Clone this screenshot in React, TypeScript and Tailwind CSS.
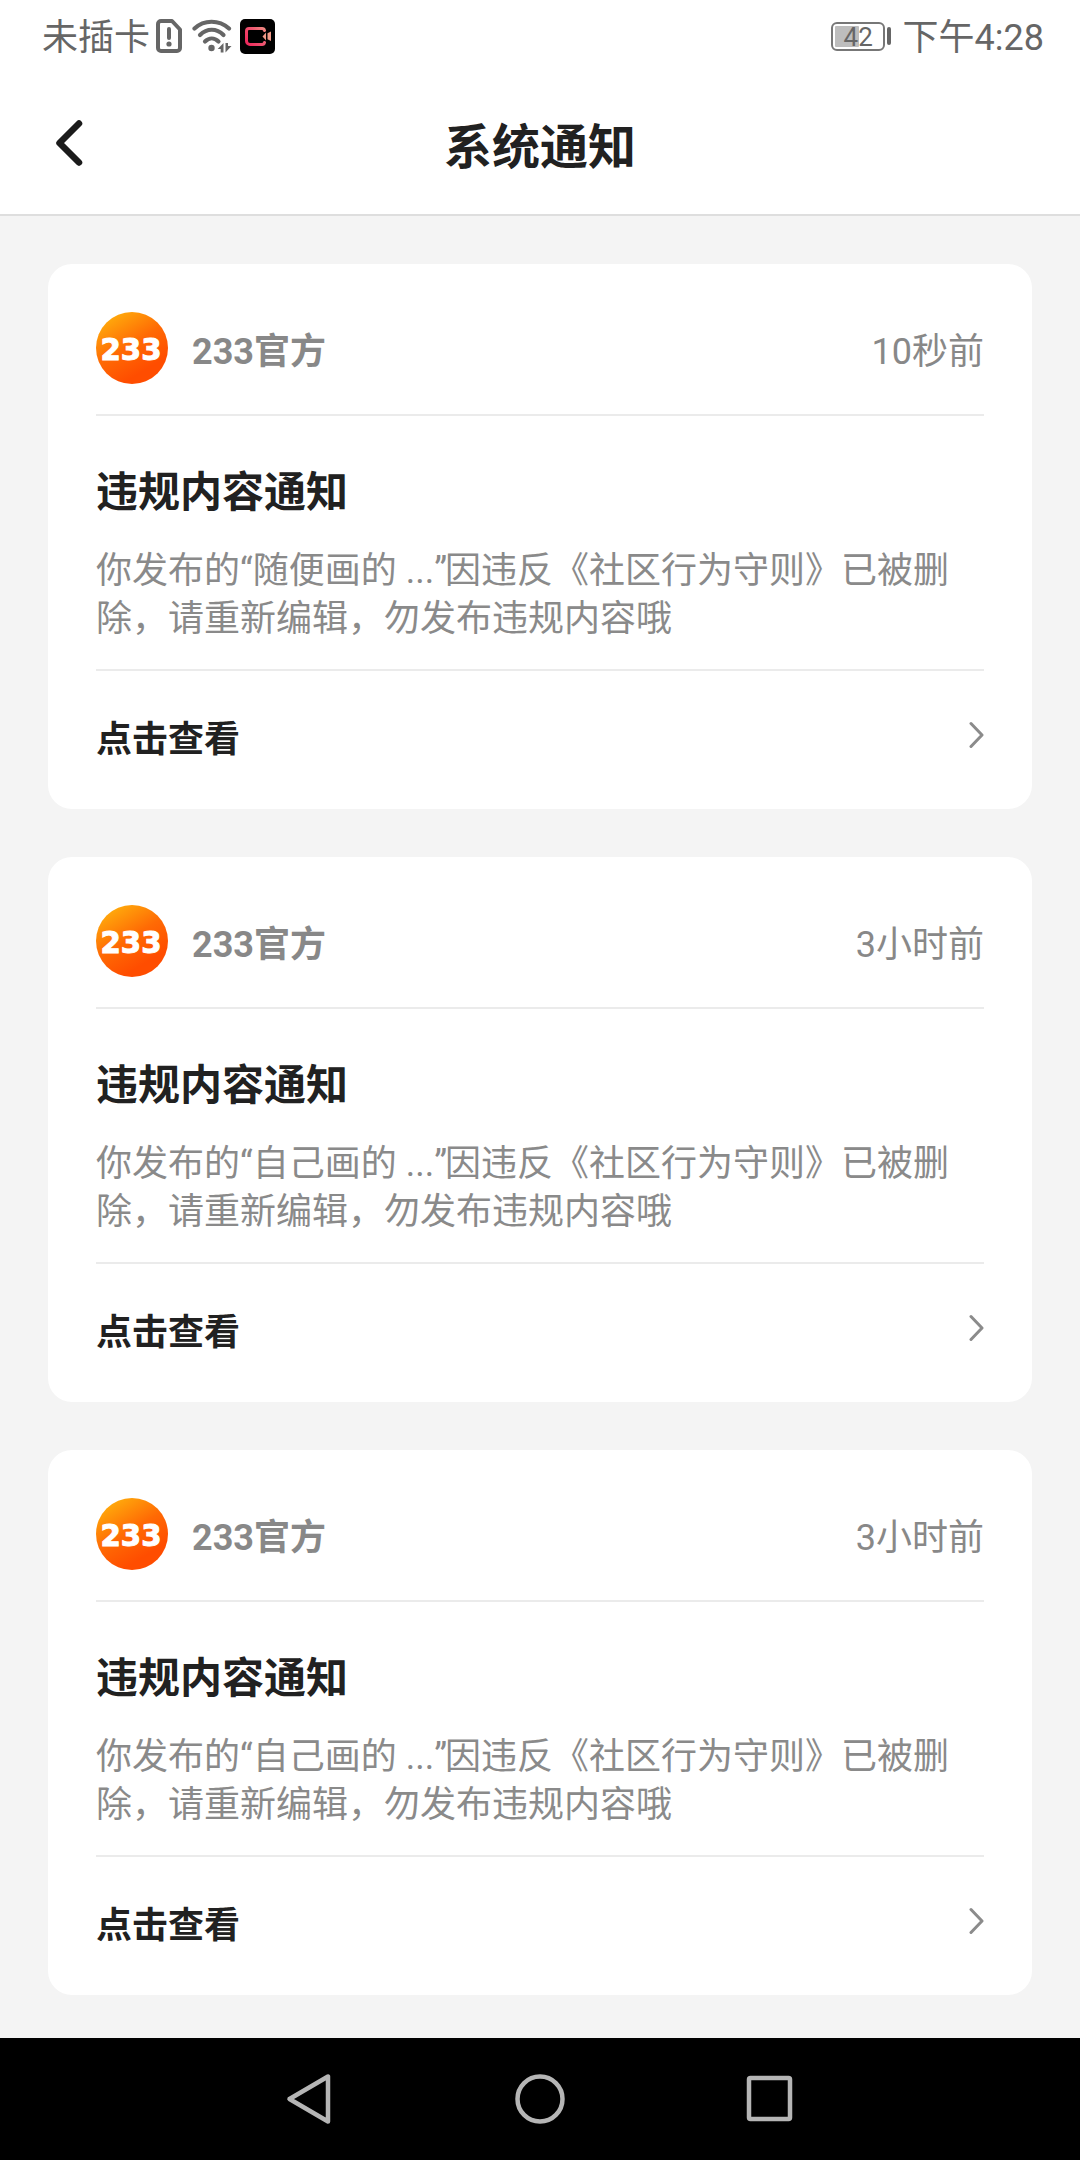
const cards = [
  { work: "随便画的", time: "10秒前" },
  { work: "自己画的", time: "3小时前" },
  { work: "自己画的", time: "3小时前" },
];

function StatusBar() {
  return (
    <div className="flex h-[72px] items-center justify-between pl-[42px] pr-[36px] text-[36px] leading-[72px] text-[#666]">
      <div className="flex h-full items-center">
        <span className="w-[114px] whitespace-nowrap pt-[4px]">未插卡</span>
        <svg width="26" height="34" viewBox="0 0 26 34" fill="none" stroke="currentColor" className="shrink-0">
          <path d="M5 2h11l8 8.5V29a3 3 0 0 1-3 3H5a3 3 0 0 1-3-3V5a3 3 0 0 1 3-3z" strokeWidth="4" strokeLinejoin="round" />
          <path d="M13 10v9" strokeWidth="4" strokeLinecap="round" />
          <circle cx="13" cy="25" r="2.6" fill="currentColor" stroke="none" />
        </svg>
        <svg width="40" height="34" viewBox="0 0 40 34" fill="none" stroke="currentColor" strokeWidth="4.2" className="ml-[10px] shrink-0" strokeLinecap="round">
          <path d="M2.500 9.500C12 .5 27 .5 37 9.500" />
          <path d="M8 16C15 9 24.500 9 31.500 16" />
          <path d="M13 22.500C17 18.500 22.500 18.500 26.500 22.500" />
          <circle cx="19.500" cy="29" r="3.2" fill="currentColor" stroke="none" />
          <path d="M31.500 24v9.500h-2.800v-3.500h-3zM33.500 33.500v-9.500h2.500v3h3.500z" fill="currentColor" stroke="none" />
        </svg>
        <svg width="35" height="35" viewBox="0 0 35 35" fill="none" className="ml-[8px] shrink-0">
          <defs>
            <linearGradient id="cam" x1="6" y1="28" x2="31" y2="8" gradientUnits="userSpaceOnUse">
              <stop stopColor="#ef2058" />
              <stop offset=".5" stopColor="#ee5570" />
              <stop offset="1" stopColor="#f2a68c" />
            </linearGradient>
          </defs>
          <rect width="35" height="35" rx="5" fill="#000" />
          <path d="M24.500 11.500a2.500 2.500 0 0 0-2.500-2H9a2.500 2.500 0 0 0-2.500 2.500V22A3.500 3.500 0 0 0 10 25.500h12a2.500 2.500 0 0 0 2.500-2" stroke="url(#cam)" strokeWidth="3" strokeLinecap="round" />
          <path d="M22.500 17.500l3.500-4v8zM27.500 14.200l3.500-1.700v9.500l-3.500-1.700z" fill="#f29a88" />
        </svg>
      </div>
      <div className="flex h-full items-center">
        <div className="relative flex h-[29px] w-[54px] items-center rounded-[6px] border-2 border-[#777] p-[2px]">
          <div className="h-full w-[24px] rounded-[1px] bg-[#bdbdbd]" />
          <span className="absolute left-[11px] top-0 text-[26px] leading-[27px]">42</span>
        </div>
        <div className="ml-[2px] mr-[12px] h-[18px] w-[4px] rounded-full bg-[#666]" />
        <span className="whitespace-nowrap pt-[4px]">下午4:28</span>
      </div>
    </div>
  );
}

function Avatar() {
  return (
    <svg width="72" height="72" viewBox="0 0 72 72">
      <defs>
        <linearGradient id="sun" x1="12" y1="4" x2="46" y2="60" gradientUnits="userSpaceOnUse">
          <stop stopColor="#ffad0c" />
          <stop offset=".55" stopColor="#ff6a04" />
          <stop offset="1" stopColor="#ff4d00" />
        </linearGradient>
      </defs>
      <circle cx="36" cy="36" r="36" fill="url(#sun)" />
      <text x="4.500" y="47.500" fontSize="30" fontWeight="700" fontFamily="DejaVu Sans" fill="#fff" stroke="#fff" strokeWidth="1" textLength="61" lengthAdjust="spacingAndGlyphs">233</text>
    </svg>
  );
}

function Card({ work, time }: { work: string; time: string }) {
  return (
    <section className="flex h-[545px] flex-col rounded-[24px] bg-white px-[48px] pt-[48px]">
      <div className="flex h-[104px] shrink-0 items-start border-b-2 border-[#ebebeb] text-[36px] leading-[72px] text-[#888]">
        <Avatar />
        <span className="ml-[24px] grow pt-[4px] font-bold">233官方</span>
        <span className="pt-[4px]">{time}</span>
      </div>
      <h2 className="mt-[45px] text-[42px] font-bold leading-[64px] text-[#212121]">违规内容通知</h2>
      <p className="mt-[22px] h-[96px] whitespace-nowrap text-[36px] leading-[48px] text-[#8a8a8a]">
        你发布的“{work} ...<span className="tracking-[-2px]">”</span>因违反《社区行为守则》已被删
        <br />
        除，请重新编辑，勿发布违规内容哦
      </p>
      <div className="mt-[26px] h-[2px] shrink-0 bg-[#ebebeb]" />
      <div className="flex h-[136px] items-center justify-between text-[36px] font-bold text-[#212121]">
        <span className="pt-[2px]">点击查看</span>
        <svg width="16" height="28" viewBox="0 0 16 28" fill="none" stroke="#8b8b8b" strokeWidth="3" strokeLinecap="round" strokeLinejoin="round" className="mb-[9px]">
          <path d="M3 2.500L14 14 3 25.500" />
        </svg>
      </div>
    </section>
  );
}

export default function App() {
  return (
    <div className="flex h-[2160px] w-[1080px] flex-col overflow-hidden bg-[#f4f4f4] font-[Roboto,'Noto_Sans_CJK_SC',sans-serif]">
      <header className="flex h-[216px] shrink-0 flex-col border-b-2 border-[#dedede] bg-white">
        <StatusBar />
        <div className="grid h-[142px] grid-cols-[1fr_auto_1fr] items-center px-[54px]">
          <svg width="30" height="48" viewBox="0 0 30 48" fill="none" stroke="#1b1b1b" strokeWidth="6.5" strokeLinecap="round" strokeLinejoin="round">
            <path d="M25 4.500L5.500 24 25 43.500" />
          </svg>
          <h1 className="pt-[9px] text-[48px] font-bold leading-[72px] text-[#212121]">系统通知</h1>
          <div />
        </div>
      </header>
      <main className="flex grow flex-col gap-[48px] px-[48px] pt-[48px]">
        {cards.map((c, i) => (
          <Card key={i} {...c} />
        ))}
      </main>
      <nav className="flex h-[122px] shrink-0 items-center justify-center gap-[178px] bg-black">
        <svg width="52" height="52" viewBox="0 0 52 52" fill="none" stroke="#b5b5b5" strokeWidth="4.500" strokeLinejoin="round">
          <path d="M44 3.500v45L5.500 26z" />
        </svg>
        <svg width="52" height="52" viewBox="0 0 52 52" fill="none" stroke="#b5b5b5" strokeWidth="4.500">
          <circle cx="26" cy="26" r="22.500" />
        </svg>
        <svg width="52" height="52" viewBox="0 0 52 52" fill="none" stroke="#b5b5b5" strokeWidth="4.500">
          <rect x="5" y="5" width="41" height="41" rx="1.500" />
        </svg>
      </nav>
    </div>
  );
}
